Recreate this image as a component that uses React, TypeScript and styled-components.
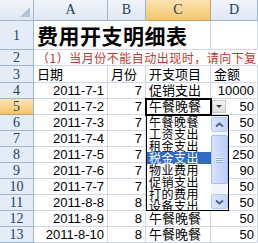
import React from "react";
import styled, { createGlobalStyle, css } from "styled-components";

const GlobalStyle = createGlobalStyle`
    html, body {
        margin: 0;
        padding: 0;
        background: #ffffff;
    }
    * {
        box-sizing: border-box;
    }
`;

const gridLine = "#d0d7e5";
const headLine = "#9eb6ce";

const Sheet = styled.div`
    position: relative;
    width: 258px;
    height: 243px;
    overflow: hidden;
    font-family: "Liberation Sans", "Noto Sans CJK SC", sans-serif;
    font-size: 13px;
    color: #000;
`;

const Grid = styled.div`
    display: grid;
    grid-template-columns: 34px 74px 38px 65px 47px;
    grid-template-rows: 21px 29px 16px 17px repeat(10, 16px);
`;

const headerBg = css`
    background: linear-gradient(#f1f5fb, #dfe7f2);
    font-family: "Liberation Serif", "Noto Sans CJK SC", serif;
    font-size: 14px;
    color: #27405e;
    display: flex;
    align-items: center;
    justify-content: center;
`;

const Corner = styled.div`
    ${headerBg};
    position: relative;
    border-right: 1px solid ${headLine};
    border-bottom: 1px solid ${headLine};

    &::after {
        content: "";
        position: absolute;
        right: 3px;
        bottom: 3px;
        border-left: 10px solid transparent;
        border-bottom: 10px solid #b4c3d6;
    }
`;

const ColHeader = styled.div<{ $active?: boolean }>`
    ${headerBg};
    border-right: 1px solid ${headLine};
    border-bottom: 1px solid ${headLine};
    ${(p) =>
        p.$active &&
        css`
            background: linear-gradient(#fbe3b4, #f4c567);
            border-right-color: #c2a26a;
            border-bottom-color: #c2a26a;
        `}
`;

const RowHeader = styled.div<{ $active?: boolean }>`
    ${headerBg};
    background: #e4ecf7;
    border-right: 1px solid ${headLine};
    border-bottom: 1px solid ${headLine};
    padding-top: 1px;
    ${(p) =>
        p.$active &&
        css`
            background: linear-gradient(#fbe3b4, #f4c567);
            border-bottom-color: #c2a26a;
        `}
`;

const Cell = styled.div<{ $right?: boolean; $span?: number; $noRight?: boolean }>`
    border-right: 1px solid ${(p) => (p.$noRight ? "transparent" : gridLine)};
    border-bottom: 1px solid ${gridLine};
    grid-column: span ${(p) => p.$span || 1};
    display: flex;
    align-items: flex-end;
    justify-content: ${(p) => (p.$right ? "flex-end" : "flex-start")};
    padding: 0 3px 0 3px;
    line-height: 15px;
    white-space: nowrap;
    overflow: hidden;
`;

const Title = styled.span`
    font-family: "Noto Sans CJK SC", sans-serif;
    font-weight: 700;
    font-size: 21px;
    line-height: 27px;
    letter-spacing: 0.5px;
`;

const Note = styled.span`
    font-family: "Noto Sans CJK SC", sans-serif;
    font-size: 12px;
    color: #c0392b;
    letter-spacing: 0.5px;
`;

const CellSel = styled.div`
    position: absolute;
    left: 145px;
    top: 98px;
    width: 67px;
    height: 18px;
    border: 2px solid #000;
    pointer-events: none;
`;

const DropButton = styled.div`
    position: absolute;
    left: 212px;
    top: 100px;
    width: 14px;
    height: 13px;
    background: linear-gradient(#f4f4f4, #dcdcdc);
    border: 1px solid #c8c8c8;
    display: flex;
    align-items: center;
    justify-content: center;

    &::after {
        content: "";
        border-left: 3px solid transparent;
        border-right: 3px solid transparent;
        border-top: 3px solid #404040;
    }
`;

const ListBox = styled.div`
    position: absolute;
    left: 146px;
    top: 115px;
    width: 83px;
    height: 96px;
    background: #fff;
    border: 1px solid #000;
    display: flex;
`;

const Items = styled.div`
    flex: 1;
    display: flex;
    flex-direction: column;
    overflow: hidden;
`;

const Item = styled.div<{ $selected?: boolean }>`
    height: 12px;
    line-height: 12px;
    padding-left: 2px;
    font-family: "Noto Sans CJK SC", sans-serif;
    font-size: 12px;
    letter-spacing: 0.5px;
    white-space: nowrap;
    ${(p) =>
        p.$selected &&
        css`
            background: #316ac5;
            color: #fff;
        `}
`;

const ScrollBar = styled.div`
    width: 17px;
    display: flex;
    flex-direction: column;
    background: #f3f5fc;
    gap: 1px;
`;

const ScrollBtn = styled.div`
    height: 15px;
    margin: 1px 0;
    background: linear-gradient(90deg, #dbe6fd, #c3d3fb);
    border: 1px solid #b7c9f3;
    border-radius: 2px;
    display: flex;
    align-items: center;
    justify-content: center;
`;

const Thumb = styled.div`
    flex: 1;
    margin: 1px 0 8px;
    background: linear-gradient(90deg, #d6e2fd, #bccefa);
    border: 1px solid #a9bef0;
    border-radius: 2px;
    display: flex;
    align-items: center;
    justify-content: center;
`;

const Grip = styled.div`
    width: 7px;
    height: 6px;
    background: repeating-linear-gradient(#eef3ff 0 1px, #8ea8e0 1px 2px);
`;

const Chevron = ({ down }: { down?: boolean }) => (
    <svg width="9" height="6" viewBox="0 0 9 6">
        <path
            d={down ? "M1 1.5 L4.5 4.5 L8 1.5" : "M1 4.5 L4.5 1.5 L8 4.5"}
            fill="none"
            stroke="#4d6185"
            strokeWidth="1.8"
        />
    </svg>
);

const rows = [
    { n: 4, date: "2011-7-1", m: "7", item: "促销支出", amt: "10000" },
    { n: 5, date: "2011-7-2", m: "7", item: "午餐晚餐", amt: "50" },
    { n: 6, date: "2011-7-3", m: "7", item: "", amt: "50" },
    { n: 7, date: "2011-7-4", m: "7", item: "", amt: "50" },
    { n: 8, date: "2011-7-5", m: "7", item: "", amt: "250" },
    { n: 9, date: "2011-7-6", m: "7", item: "", amt: "90" },
    { n: 10, date: "2011-7-7", m: "7", item: "", amt: "50" },
    { n: 11, date: "2011-8-8", m: "8", item: "", amt: "50" },
    { n: 12, date: "2011-8-9", m: "8", item: "午餐晚餐", amt: "50" },
    { n: 13, date: "2011-8-10", m: "8", item: "午餐晚餐", amt: "50" }
];

const options = ["午餐晚餐", "工资支出", "租金支出", "税金支出", "物业费用", "促销支出", "打的费用", "设备支出"];

export default function App() {
    return (
        <>
            <GlobalStyle />
            <Sheet>
                <Grid>
                    <Corner />
                    <ColHeader>A</ColHeader>
                    <ColHeader>B</ColHeader>
                    <ColHeader $active>C</ColHeader>
                    <ColHeader>D</ColHeader>

                    <RowHeader>1</RowHeader>
                    <Cell $span={3}>
                        <Title>费用开支明细表</Title>
                    </Cell>
                    <Cell />

                    <RowHeader>2</RowHeader>
                    <Cell $span={4} $noRight>
                        <Note>（1）当月份不能自动出现时，请向下复制公式</Note>
                    </Cell>

                    <RowHeader>3</RowHeader>
                    <Cell>日期</Cell>
                    <Cell>月份</Cell>
                    <Cell>开支项目</Cell>
                    <Cell>金额</Cell>

                    {rows.map((r) => (
                        <React.Fragment key={r.n}>
                            <RowHeader $active={r.n === 5}>{r.n}</RowHeader>
                            <Cell $right>{r.date}</Cell>
                            <Cell $right>{r.m}</Cell>
                            <Cell>{r.item}</Cell>
                            <Cell $right>{r.amt}</Cell>
                        </React.Fragment>
                    ))}
                </Grid>

                <CellSel />
                <DropButton />
                <ListBox>
                    <Items>
                        {options.map((o, i) => (
                            <Item key={o} $selected={i === 3}>
                                {o}
                            </Item>
                        ))}
                    </Items>
                    <ScrollBar>
                        <ScrollBtn>
                            <Chevron />
                        </ScrollBtn>
                        <Thumb>
                            <Grip />
                        </Thumb>
                        <ScrollBtn>
                            <Chevron down />
                        </ScrollBtn>
                    </ScrollBar>
                </ListBox>
            </Sheet>
        </>
    );
}
